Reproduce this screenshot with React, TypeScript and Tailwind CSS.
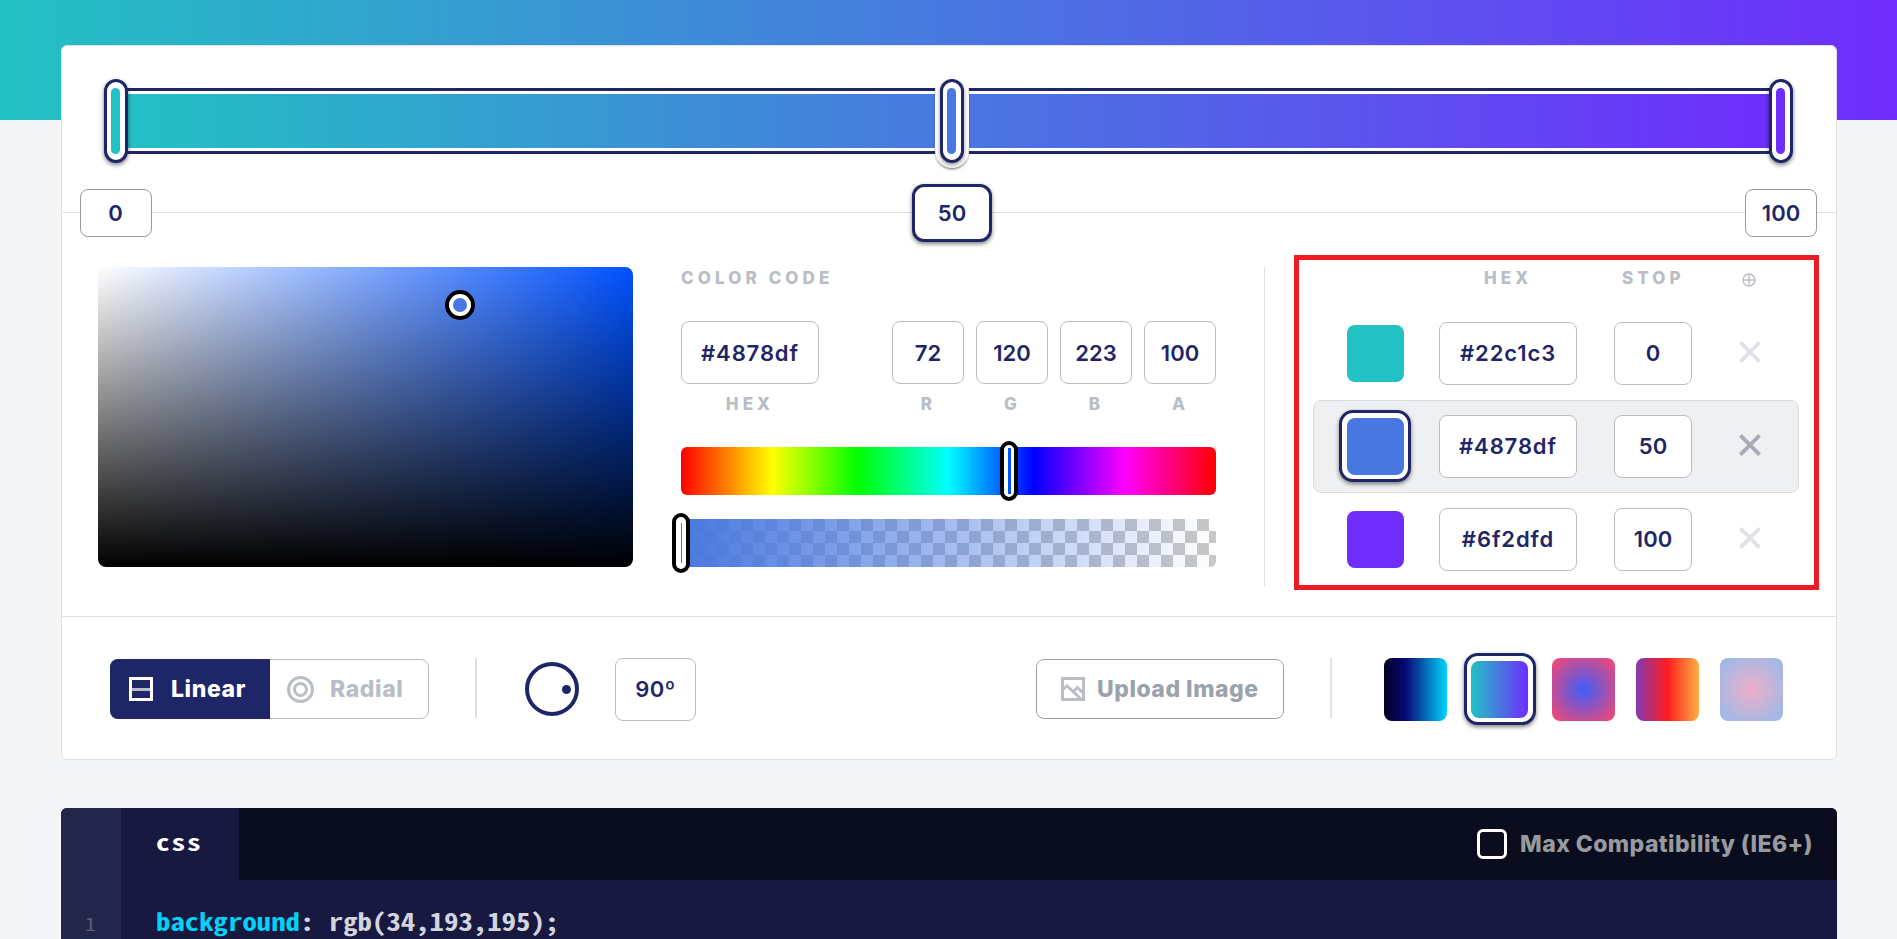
import React from "react";
import clsx from "clsx";

const VALUE =
  "flex items-center justify-center rounded-lg border bg-white text-[22px] leading-none font-semibold text-[#1f2667]";
const LABEL = "text-[17px] leading-none font-extrabold text-[#b9bdc5]";

type Stop = { hex: string; stop: number; fill: string; active?: boolean };

const stops: Stop[] = [
  { hex: "#22c1c3", stop: 0, fill: "bg-[#22c1c3]" },
  { hex: "#4878df", stop: 50, fill: "bg-[#4878df]", active: true },
  { hex: "#6f2dfd", stop: 100, fill: "bg-[#6f2dfd]" },
];

const channels = [
  { name: "R", value: 72 },
  { name: "G", value: 120 },
  { name: "B", value: 223 },
  { name: "A", value: 100 },
];

function Handle({ className, fill }: { className: string; fill: string }) {
  return (
    <div
      className={clsx(
        "absolute top-[33px] flex h-[84px] w-6 rounded-full border-[3px] border-[#1f2667] bg-white py-1.5 pl-1",
        className,
      )}
    >
      <div className={clsx("w-[9px] rounded-full", fill)} />
    </div>
  );
}

function GradientBar() {
  return (
    <div className="relative h-[167px] border-b border-[#dfe0e6] px-[54px] pt-[42px]">
      <div className="h-[66px] border-y-[3px] border-[#1f2667] py-[3px]">
        <div className="h-full bg-[linear-gradient(90deg,#22c1c3_0%,#4878df_50%,#6f2dfd_100%)]" />
      </div>
      <Handle className="left-[42px] shadow-[0_2px_4px_rgba(0,0,0,0.5)]" fill="bg-[#22c1c3]" />
      <Handle
        className="left-[878px] shadow-[0_2px_4px_rgba(0,0,0,0.4),0_0_0_5px_#fff,0_2px_3px_4px_rgba(0,0,0,0.6)]"
        fill="bg-[#4878df]"
      />
      <Handle className="left-[1707px] shadow-[0_2px_4px_rgba(0,0,0,0.5)]" fill="bg-[#6f2dfd]" />
      <div className={clsx(VALUE, "absolute top-[143px] left-[18px] h-12 w-[72px] border-[#999] pr-px")}>0</div>
      <div className="absolute top-[138px] left-[850px] flex h-[58px] w-20 items-center justify-center rounded-xl border-[3px] border-[#1f2667] bg-white text-[22px] leading-none font-semibold text-[#1f2667] shadow-[0_2px_4px_rgba(0,0,0,0.5)]">
        50
      </div>
      <div className={clsx(VALUE, "absolute top-[143px] left-[1683px] h-12 w-[72px] border-[#999]")}>100</div>
    </div>
  );
}

function ColorField() {
  return (
    <div className="relative h-[300px] w-[535px] rounded-lg bg-[linear-gradient(0deg,#000,transparent),linear-gradient(90deg,#fff,#0051ff)]">
      <div className="absolute top-[23px] left-[347px] size-[30px] rounded-full border-4 border-black bg-white p-1">
        <div className="size-full rounded-full bg-[#4878df]" />
      </div>
    </div>
  );
}

function SliderThumb({ className, inner }: { className: string; inner: string }) {
  return (
    <div
      className={clsx(
        "absolute -top-1.5 flex h-[60px] w-[18px] justify-center rounded-full border-4 border-black bg-white py-[3px]",
        className,
      )}
    >
      <div className={inner} />
    </div>
  );
}

function ColorCode() {
  return (
    <div className="ml-12 w-[535px]">
      <div className={clsx(LABEL, "pt-[3px] tracking-[4.1px]")}>COLOR CODE</div>
      <div className="mt-[34px] flex justify-between">
        <div className="flex flex-col items-center">
          <div className={clsx(VALUE, "h-[63px] w-[138px] border-[#b9bdc5] tracking-[0.9px]")}>#4878df</div>
          <div className={clsx(LABEL, "mt-[12px] tracking-[4.1px]")}>HEX</div>
        </div>
        <div className="flex gap-3">
          {channels.map((c) => (
            <div key={c.name} className="flex flex-col items-center">
              <div className={clsx(VALUE, "h-[63px] w-[72px] border-[#b9bdc5]")}>{c.value}</div>
              <div className={clsx(LABEL, "mt-[12px] pr-[3px]")}>{c.name}</div>
            </div>
          ))}
        </div>
      </div>
      <div className="relative mt-[34px] h-12 rounded-md bg-[linear-gradient(90deg,#f00_0%,#ff0_17%,#0f0_33%,#0ff_50%,#00f_66%,#f0f_83%,#f00_100%)]">
        <SliderThumb className="left-[319px]" inner="w-[3px] bg-[#0051ff]" />
      </div>
      <div className="relative mt-6 h-12">
        <div className="h-full rounded-md bg-[linear-gradient(90deg,#4878df,transparent),conic-gradient(#c8c8c8_25%,#fff_0_50%,#c8c8c8_0_75%,#fff_0)] bg-[size:100%_100%,24px_24px]" />
        <SliderThumb className="-left-[9px]" inner="my-[3px] w-px bg-[#4878df]" />
      </div>
    </div>
  );
}

function Cross({ active }: { active?: boolean }) {
  return (
    <svg
      viewBox="0 0 22 22"
      className={clsx("-mt-[3px] ml-[47px] size-[22px]", active ? "text-[#a6acb6]" : "text-[#dfe1e6]")}
      fill="none"
      stroke="currentColor"
      strokeWidth="3.8"
    >
      <path d="M1.4 1.4 20.6 20.6M20.6 1.4 1.4 20.6" />
    </svg>
  );
}

function StopList() {
  return (
    <div className="-mt-3 ml-[29px] h-[335px] w-[525px] border-[5px] border-[#ed1c24] pt-[10px] pl-[14px]">
      <div className="flex h-[37px] items-start">
        <div className={clsx(LABEL, "ml-[171px] w-[138px] tracking-[4.1px]")}>HEX</div>
        <div className={clsx(LABEL, "w-[120px] tracking-[4.1px]")}>STOP</div>
        <svg viewBox="0 0 14 14" className="mt-[2.5px] size-3.5" fill="none" stroke="#b9bdc5" strokeWidth="1.4">
          <circle cx="7" cy="7" r="6" />
          <path d="M7 1v12M1 7h12" />
        </svg>
      </div>
      {stops.map((s) => (
        <div
          key={s.hex}
          className={clsx(
            "flex h-[93px] w-[486px] items-center rounded-lg border",
            s.active ? "border-[#d9dce0] bg-[#eff0f2]" : "border-transparent",
          )}
        >
          <div
            className={clsx(
              "-mt-px ml-[25px] size-[72px] rounded-[14px] border-[3px] p-[4.5px]",
              s.active ? "border-[#1f2667] bg-white shadow-[0_2px_4px_rgba(0,0,0,0.5)]" : "border-transparent",
            )}
          >
            <div className={clsx("size-full rounded-lg", s.fill)} />
          </div>
          <div className={clsx(VALUE, "ml-7 h-[63px] w-[138px] border-[#b9bdc5] pb-[2px] tracking-[0.9px]")}>
            {s.hex}
          </div>
          <div className={clsx(VALUE, "ml-[37px] h-[63px] w-[78px] border-[#b9bdc5] pb-[2px]")}>{s.stop}</div>
          <Cross active={s.active} />
        </div>
      ))}
    </div>
  );
}

function Toolbar() {
  return (
    <div className="flex h-[143px] items-start pt-[41px] pl-12">
      <div className="mt-px flex h-[60px] w-[319px] rounded-lg border border-[#b9bdc5] text-[23px] font-extrabold tracking-[0.6px]">
        <div className="-my-px -ml-px flex w-[160px] items-center rounded-l-lg bg-[#1f2667] pl-[19px] text-white">
          <svg viewBox="0 0 24 24" className="size-6" fill="none" strokeWidth="3">
            <path d="M3 12.5h18" stroke="#b9bdc5" />
            <rect x="1.5" y="1.5" width="21" height="21" stroke="#fff" />
          </svg>
          <span className="ml-[18px]">Linear</span>
        </div>
        <div className="flex items-center pl-[17px] text-[#b9bdc5]">
          <svg viewBox="0 0 27 27" className="size-[27px]" fill="none" stroke="currentColor">
            <circle cx="13.5" cy="13.5" r="12" strokeWidth="3" />
            <circle cx="13.5" cy="13.5" r="6" strokeWidth="3" />
          </svg>
          <span className="ml-4">Radial</span>
        </div>
      </div>
      <div className="ml-[46px] h-[60px] w-0.5 bg-[#dfe0e6]" />
      <div className="mt-1 ml-12 flex size-[54px] items-center justify-end rounded-full border-4 border-[#1f2667] pr-1">
        <div className="size-[9px] rounded-full bg-[#1f2667]" />
      </div>
      <div className={clsx(VALUE, "ml-9 h-[63px] w-[81px] border-[#b9bdc5] pb-0.5 tracking-[0.5px]")}>90º</div>

      <div className="mt-px ml-[340px] flex h-[60px] w-[248px] items-center rounded-lg border border-[#9ca2ac] pl-6">
        <svg viewBox="0 0 24 24" className="size-6" fill="none" stroke="#b9bdc5" strokeWidth="3">
          <rect x="1.5" y="1.5" width="21" height="21" />
          <path d="M2 12.5 6 9 20 22M12.5 14.5 16.500 10.500 22 16" strokeWidth="2.8" />
        </svg>
        <span className="ml-3 text-[23px] font-extrabold tracking-[0.5px] whitespace-nowrap text-[#9ca2ac]">
          Upload Image
        </span>
      </div>
      <div className="ml-[46px] h-[60px] w-0.5 bg-[#dfe0e6]" />
      <div className="ml-[52px] flex gap-[21px]">
        <div className="size-[63px] rounded-lg bg-[linear-gradient(90deg,#020024_0%,#090979_35%,#00d4ff_100%)]" />
        <div className="-m-[4.5px] mt-[-5px] size-[72px] rounded-[14px] border-[3px] border-[#1f2667] bg-white p-[4.5px] shadow-[0_2px_4px_rgba(0,0,0,0.5)]">
          <div className="size-full rounded-lg bg-[linear-gradient(90deg,#22c1c3_0%,#4878df_50%,#6f2dfd_100%)]" />
        </div>
        <div className="size-[63px] rounded-lg bg-[radial-gradient(circle,#3f5efb_0%,#fc466b_100%)]" />
        <div className="size-[63px] rounded-lg bg-[linear-gradient(90deg,#833ab4_0%,#fd1d1d_50%,#fcb045_100%)]" />
        <div className="size-[63px] rounded-lg bg-[radial-gradient(circle,#eeaeca_0%,#94bbe9_100%)]" />
      </div>
    </div>
  );
}

function CodePanel() {
  return (
    <section className="mt-12 ml-[61px] flex h-[180px] w-[1776px] overflow-hidden rounded-t-md bg-[#171941] font-['Noto_Sans_Mono_CJK_SC','Liberation_Mono',monospace]">
      <div className="w-[60px] bg-[#23264b] pt-[101px] pl-6 text-[18px] leading-7 font-medium text-[#5b5e7c]">
        <div className="origin-left scale-x-120">1</div>
      </div>
      <div className="flex-1">
        <div className="flex h-[72px] bg-[#0a0d1e]">
          <div className="w-[118px] bg-[#171941] pt-[22px] pl-[35px] text-[23px] leading-none font-bold tracking-[1.4px] text-white">
            <div className="origin-left scale-x-120">css</div>
          </div>
          <div className="ml-auto flex items-center pr-6 font-[Inter,sans-serif]">
            <div className="size-[30px] rounded-md border-[3px] border-white" />
            <span className="ml-[13px] text-[23px] font-extrabold tracking-[0.42px] text-[#999a9f]">
              Max Compatibility (IE6+)
            </span>
          </div>
        </div>
        <pre className="mt-6 ml-[35px] origin-left scale-x-120 font-[inherit] text-[24px] leading-[34px] font-bold text-[#d3d4dd]">
          <span className="text-[#00d1f5]">background</span>: rgb(34,193,195);
        </pre>
      </div>
    </section>
  );
}

export default function App() {
  return (
    <div className="h-[939px] w-[1897px] overflow-hidden bg-[#f4f5f7] font-[Inter,sans-serif]">
      <header className="h-[120px] bg-[linear-gradient(90deg,#22c1c3_0%,#4878df_50%,#6f2dfd_100%)]" />
      <main className="relative -mt-[75px]">
        <section className="ml-[61px] h-[715px] w-[1776px] rounded-md border border-[#dfe0e6] bg-white">
          <GradientBar />
          <div className="flex h-[404px] items-start border-b border-[#dfe0e6] pt-[54px] pl-9">
            <ColorField />
            <ColorCode />
            <div className="ml-12 h-[319px] w-px bg-[#dfe0e6]" />
            <StopList />
          </div>
          <Toolbar />
        </section>
        <CodePanel />
      </main>
    </div>
  );
}
